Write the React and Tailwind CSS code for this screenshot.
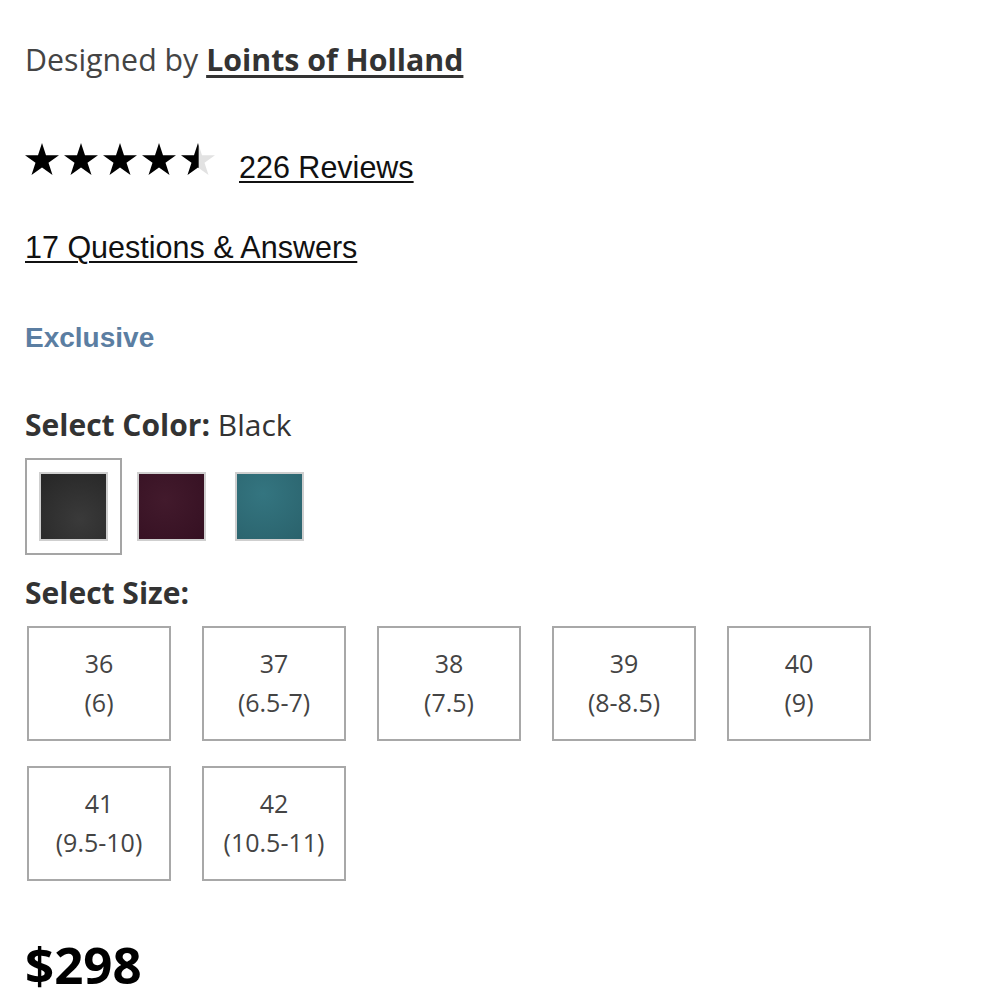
import React from 'react'

const STAR = '50,0 61.8,38.2 100,38.2 69.1,61.8 80.9,100 50,76.4 19.1,100 30.9,61.8 0,38.2 38.2,38.2'

function Star({ fill = 1 }) {
  return (
    <svg width="34" height="32" viewBox="0 0 100 100" preserveAspectRatio="none">
      <defs>
        <clipPath id="half">
          <rect x="0" y="0" width="52" height="100" />
        </clipPath>
      </defs>
      {fill < 1 && <polygon points={STAR} fill="#e2e2e2" />}
      <polygon points={STAR} fill="#000" clipPath={fill < 1 ? 'url(#half)' : undefined} />
    </svg>
  )
}

export default function App() {
  const swatches = [
    { name: 'Black', bg: 'bg-[radial-gradient(circle_at_60%_70%,#3a3a3a,#262626)]', selected: true },
    { name: 'Plum', bg: 'bg-[radial-gradient(circle_at_40%_40%,#421a2c,#351022)]', selected: false },
    { name: 'Teal', bg: 'bg-[radial-gradient(circle_at_40%_30%,#347580,#2a626c)]', selected: false },
  ]

  const sizes = [
    ['36', '(6)'],
    ['37', '(6.5-7)'],
    ['38', '(7.5)'],
    ['39', '(8-8.5)'],
    ['40', '(9)'],
    ['41', '(9.5-10)'],
    ['42', '(10.5-11)'],
  ]

  return (
    <div className="min-h-screen bg-white pl-[25px] pt-[40px] font-['Open_Sans',sans-serif]">
      {/* Designer */}
      <p className="text-[30.3px] leading-[40px] text-[#444]">
        Designed by{' '}
        <a href="#" className="font-bold text-[#333] underline decoration-[3px] underline-offset-[4px]">
          Loints of Holland
        </a>
      </p>

      {/* Rating */}
      <div className="mt-[62px] flex items-start">
        <div className="mt-[1px] flex gap-[5px]">
          <Star />
          <Star />
          <Star />
          <Star />
          <Star fill={0.5} />
        </div>
        <a
          href="#"
          className="ml-[24px] mt-[5px] font-['Liberation_Sans',Arial,sans-serif] text-[30.5px] leading-[40px] text-[#111] underline decoration-2 underline-offset-[3px]"
        >
          226 Reviews
        </a>
      </div>

      <a
        href="#"
        className="mt-[40px] block w-fit font-['Liberation_Sans',Arial,sans-serif] text-[30.5px] leading-[40px] text-[#111] underline decoration-2 underline-offset-[3px]"
      >
        17 Questions &amp; Answers
      </a>

      <p className="mt-[51px] font-['Liberation_Sans',Arial,sans-serif] text-[28px] font-bold leading-[40px] text-[#5b7ea2]">
        Exclusive
      </p>

      {/* Color */}
      <p className="mt-[47px] text-[30px] leading-[40px] text-[#333]">
        <span className="font-bold">Select Color:</span> Black
      </p>
      <div className="mt-[13px] flex gap-[1px]">
        {swatches.map((s) => (
          <button
            key={s.name}
            className={`flex h-[97px] w-[97px] items-center justify-center border-2 ${
              s.selected ? 'border-[#a5a5a5]' : 'border-transparent'
            }`}
          >
            <span className={`block h-[69px] w-[69px] border-2 border-[#cfcfcf] ${s.bg}`} />
          </button>
        ))}
      </div>

      {/* Size */}
      <p className="mt-[18px] text-[30px] font-bold leading-[40px] text-[#333]">Select Size:</p>
      <div className="ml-[2px] mt-[13px] grid w-[844px] grid-cols-[repeat(5,144px)] gap-x-[31px] gap-y-[25px]">
        {sizes.map(([eu, us]) => (
          <button
            key={eu}
            className="flex h-[115px] flex-col items-center justify-center border-2 border-[#a8a8a8] pb-[2px] text-[25px] leading-[39px] text-[#444]"
          >
            <span>{eu}</span>
            <span>{us}</span>
          </button>
        ))}
      </div>

      <p className="mt-[53px] text-[51px] font-bold leading-[60px] text-black">$298</p>
    </div>
  )
}
